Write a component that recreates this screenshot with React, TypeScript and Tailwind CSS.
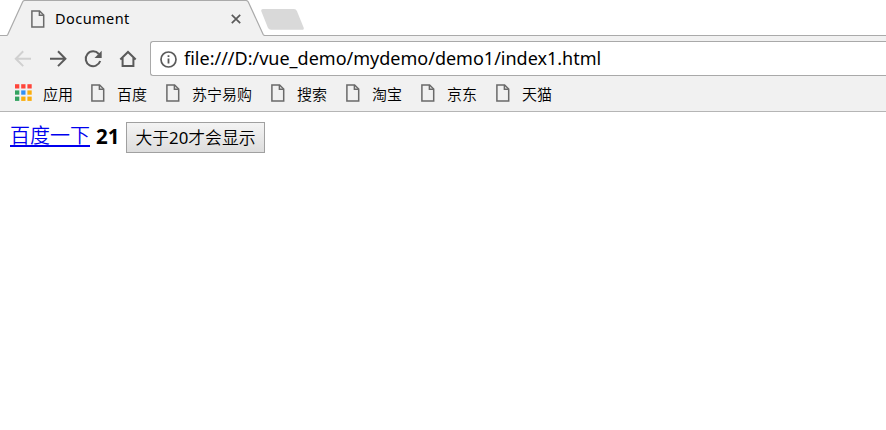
import React from "react";

function PageIcon() {
  return (
    <svg width="14" height="18" viewBox="0 0 14 18" fill="none" stroke="#6a6a6a" strokeWidth="1.5" className="block shrink-0">
      <path d="M.9 .9H8.6L12.7 5V16.9H.9Z" />
      <path d="M8.4 1V5.2H12.6" />
    </svg>
  );
}

function TabStrip() {
  return (
    <header className="relative h-9 bg-white">
      <svg width="886" height="36" viewBox="0 0 886 36" className="absolute inset-0 block">
        <path d="M0 35.5H7L22.6 2Q23.3 .5 25 .5H245.5Q247.5 .5 248.3 2L264 35.5H886V36H0Z" fill="#f1f1f1" />
        <path d="M0 35.5H6.5Q7.3 35.5 7.8 34.5L22.6 2Q23.3 .5 25 .5H245.5Q247.5 .5 248.3 2L263.2 34.5Q263.8 35.5 265 35.5H886" fill="none" stroke="#aaaaaa" strokeWidth="1.2" />
        <path d="M263 9H294Q296 9 296.9 11L303.6 27.5Q304.4 29.8 302 29.8H271Q269 29.8 268 28L261.4 11.5Q260.6 9 263 9Z" fill="#d9d9d9" />
      </svg>
      <div className="relative flex h-9 items-center pb-px pl-[31px] pt-[2px]">
        <PageIcon />
        <span className="mb-[2px] ml-[10px] w-[176px] whitespace-nowrap text-[14.5px] leading-5 tracking-[0.45px] text-black">Document</span>
        <svg width="10" height="10" viewBox="0 0 10 10" stroke="#5a5a5a" strokeWidth="1.7" className="block">
          <path d="M.8 .8 9.2 9.2M9.2 .8.8 9.2" />
        </svg>
      </div>
    </header>
  );
}

function Toolbar() {
  return (
    <div className="flex h-10 items-start pt-[5px]">
      <svg width="150" height="35" viewBox="0 0 150 35" fill="none" strokeWidth="2" className="block shrink-0">
        <path d="M31 17.7H16M23.2 10.3 15.8 17.7 23.2 25.1" stroke="#d0d0d0" />
        <path d="M50 17.7H65M58 10.3 65.4 17.7 58 25.1" stroke="#5a5a5a" />
        <path d="M98.8 13A7.4 7.4 0 1 0 100.2 20" stroke="#5a5a5a" />
        <path d="M101.7 9.8V17H94.5Z" fill="#5a5a5a" />
        <path d="M120.3 18.5 128 11 135.7 18.5M122.6 17V25H133.4V17" stroke="#5a5a5a" />
      </svg>
      <div className="flex h-[35px] flex-1 items-center rounded-l-[3px] border border-r-0 border-[#a9a9a9] bg-white pl-[9px]">
        <svg width="17" height="17" viewBox="0 0 17 17" className="mt-px block shrink-0">
          <circle cx="8.5" cy="8.5" r="7.5" fill="none" stroke="#5a5a5a" strokeWidth="1.7" />
          <path d="M7.6 7.5H9.4V12.6H7.6ZM7.6 4.3H9.4V6.1H7.6Z" fill="#5a5a5a" />
        </svg>
        <span className="mb-[2px] ml-[7px] whitespace-nowrap text-[18px] leading-6 text-black">file:///D:/vue_demo/mydemo/demo1/index1.html</span>
      </div>
    </div>
  );
}

const dotColors = ["#ff453a", "#ff453a", "#ff453a", "#34a360", "#3390f5", "#fbad0c", "#34a360", "#fbad0c", "#fbad0c"];
const bookmarks = ["百度", "苏宁易购", "搜索", "淘宝", "京东", "天猫"];

function BookmarksBar() {
  return (
    <nav className="flex h-9 items-start border-b border-[#b5b5b5] pl-[15px] text-[15px] font-[350] leading-5 text-black">
      <svg width="17" height="17" viewBox="0 0 17 17" className="mt-2 block shrink-0">
        {dotColors.map((color, i) => (
          <rect key={i} x={(i % 3) * 6.2} y={Math.floor(i / 3) * 6.2 + 0.2} width="4.3" height="4.3" fill={color} />
        ))}
      </svg>
      <span className="ml-[11px] mt-2 w-[48px] whitespace-nowrap">应用</span>
      {bookmarks.map((name) => (
        <div key={name} className="mr-[19px] mt-2 flex">
          <PageIcon />
          <span className="ml-3 whitespace-nowrap">{name}</span>
        </div>
      ))}
    </nav>
  );
}

export default function App() {
  return (
    <div className="h-[430px] w-[886px] overflow-hidden bg-white font-['Noto_Sans','Noto_Sans_CJK_SC',sans-serif]">
      <TabStrip />
      <div className="bg-[#f1f1f1]">
        <Toolbar />
        <BookmarksBar />
      </div>
      <main className="flex items-start pl-[10px] pt-[10px]">
        <a href="#" className="mt-px w-[80px] whitespace-nowrap text-[20px] font-[350] leading-[26px] text-[#0000ee] underline decoration-2 underline-offset-2">百度一下</a>
        <b className="ml-[6px] w-[30px] text-[20.5px] leading-[28px] text-black">21</b>
        <button className="h-[31px] w-[139px] whitespace-nowrap border border-[#a0a0a0] bg-linear-to-b from-[#f4f4f4] to-[#dddddd] text-[16.8px] font-[350] leading-5 text-black">
          大于<span className="font-normal">20</span>才会显示
        </button>
      </main>
    </div>
  );
}
